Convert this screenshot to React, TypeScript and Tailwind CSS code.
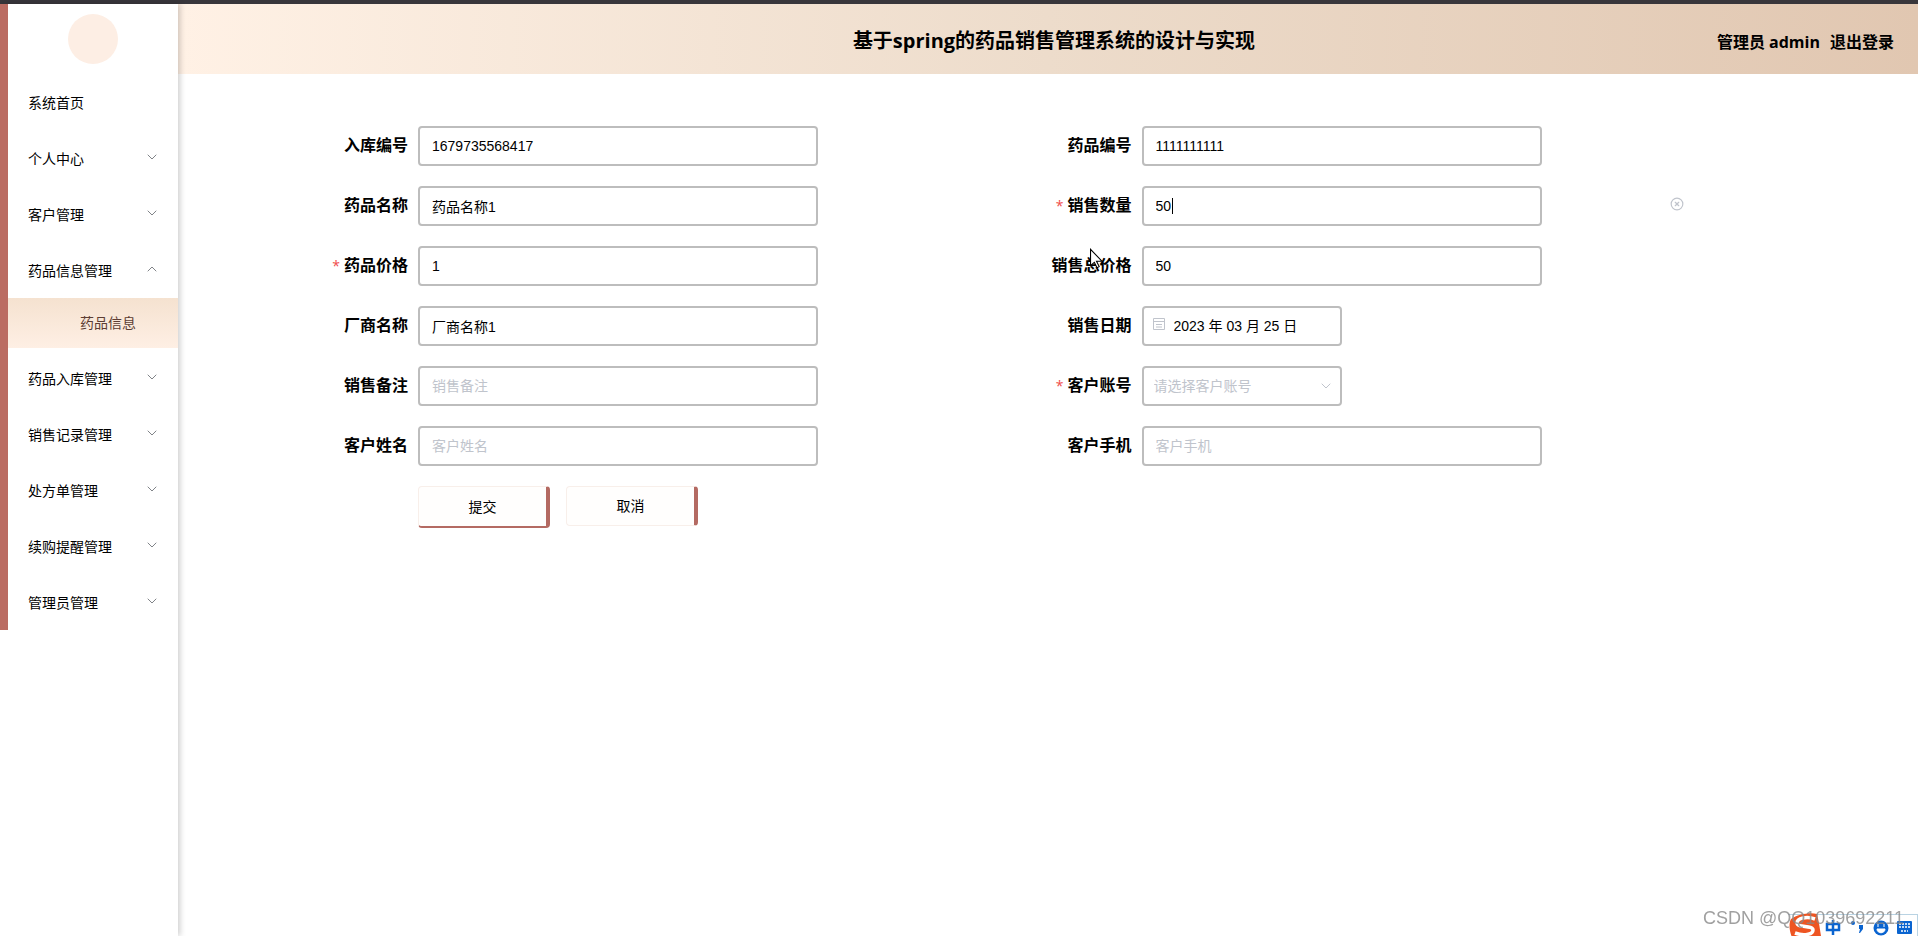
import { useId, useState } from "react";
import { ChevronDown, ChevronUp, CircleX } from "lucide-react";

interface MenuEntry {
  title: string;
  children?: string[];
  expanded?: boolean;
}

const menu: MenuEntry[] = [
  { title: "系统首页" },
  { title: "个人中心", children: [] },
  { title: "客户管理", children: [] },
  { title: "药品信息管理", children: ["药品信息"], expanded: true },
  { title: "药品入库管理", children: [] },
  { title: "销售记录管理", children: [] },
  { title: "处方单管理", children: [] },
  { title: "续购提醒管理", children: [] },
  { title: "管理员管理", children: [] },
];

const boxClass =
  "h-10 rounded border-2 border-[#bdbdbd] bg-white text-sm outline-none placeholder:text-[#c0c4cc]";

function Sidebar() {
  return (
    <aside className="z-10 flex w-[178px] shrink-0 items-start shadow-[2px_0_6px_rgba(0,0,0,0.2)]">
      <nav className="w-full border-l-8 border-[#bb6c62]">
        <div className="flex h-[70px] items-center justify-center">
          <div className="size-[50px] rounded-full bg-[#fdeee4]" />
        </div>
        <ul>
          {menu.map((entry) => (
            <li key={entry.title}>
              <button
                type="button"
                className="flex h-14 w-full items-center justify-between pt-0.5 pr-[18px] pl-5 text-sm text-black"
              >
                {entry.title}
                {entry.children &&
                  (entry.expanded ? (
                    <ChevronUp className="mb-1 size-4 text-[#808388]" strokeWidth={1.5} />
                  ) : (
                    <ChevronDown className="mb-1 size-4 text-[#808388]" strokeWidth={1.5} />
                  ))}
              </button>
              {entry.expanded &&
                entry.children?.map((child) => (
                  <a
                    key={child}
                    href="#"
                    className="mb-0.5 flex h-[50px] items-center bg-linear-to-b from-[#f5e2d0] to-[#feefe4] pl-[72px] text-sm text-[#5c3d33]"
                  >
                    {child}
                  </a>
                ))}
            </li>
          ))}
        </ul>
      </nav>
    </aside>
  );
}

function Header() {
  return (
    <header className="grid h-[70px] grid-cols-[1fr_auto_1fr] items-center bg-linear-to-r from-[#fff1e5] via-[#eddccb] to-[#e1c7b1] pt-1 pr-6 pl-9 font-['Open_Sans','Noto_Sans_CJK_SC',sans-serif] font-bold text-black">
      <h1 className="col-start-2 text-xl">基于spring的药品销售管理系统的设计与实现</h1>
      <div className="flex justify-end gap-2.5 pt-0.5 text-base">
        <span>管理员 admin</span>
        <a href="#">退出登录</a>
      </div>
    </header>
  );
}

interface FieldProperties {
  label: string;
  required?: boolean;
  value?: string;
  clearable?: boolean;
  focused?: boolean;
  kind?: "text" | "date" | "select";
}

function Field({
  label,
  required,
  value = "",
  clearable,
  focused,
  kind = "text",
}: FieldProperties) {
  const id = useId();
  const [text, setText] = useState(value);

  return (
    <div className="flex items-center">
      <label
        htmlFor={id}
        className="w-[95px] shrink-0 pr-2.5 text-right text-base font-bold whitespace-nowrap text-black"
      >
        {required && (
          <span className="mr-1 font-['Open_Sans',sans-serif] text-sm font-normal text-[#f04c4c]">
            *
          </span>
        )}
        {label}
      </label>

      {kind === "text" && (
        <div className="relative w-[400px]">
          <input
            id={id}
            type="text"
            value={text}
            placeholder={label}
            onChange={(event) => setText(event.target.value)}
            className={`${boxClass} w-full px-3 text-black`}
          />
          {focused && <span className="absolute top-3 left-[30px] h-4 w-px bg-black" />}
        </div>
      )}

      {kind === "date" && (
        <div className={`${boxClass} flex w-[200px] items-center gap-2 px-2 text-black`}>
          <svg
            viewBox="0 0 14 14"
            className="mb-1 size-3.5 shrink-0 text-[#c0c4cc]"
            fill="none"
            stroke="currentColor"
          >
            <path d="M1.5 1.5h11v11h-11zM1.5 4.5h11M4 7.5h6M4 10h6" />
          </svg>
          <input
            id={id}
            type="text"
            value={text}
            onChange={(event) => setText(event.target.value)}
            className="min-w-0 flex-1 outline-none"
          />
        </div>
      )}

      {kind === "select" && (
        <div className="relative w-[200px]">
          <select
            id={id}
            defaultValue=""
            className={`${boxClass} w-full appearance-none px-2.5 text-[#c0c4cc]`}
          >
            <option value="">请选择客户账号</option>
          </select>
          <ChevronDown
            className="pointer-events-none absolute top-3 right-2 size-4 text-[#c0c4cc]"
            strokeWidth={1.5}
          />
        </div>
      )}

      {clearable && (
        <button
          type="button"
          aria-label="清空"
          onClick={() => setText("")}
          className="mb-1 ml-32 text-[#c0c4cc]"
        >
          <CircleX className="size-3.5" strokeWidth={2} />
        </button>
      )}
    </div>
  );
}

function SaleForm() {
  return (
    <form className="pt-[52px] pr-[148px] pl-[145px]" onSubmit={(event) => event.preventDefault()}>
      <div className="grid grid-cols-2 gap-y-5">
        <Field label="入库编号" value="1679735568417" />
        <Field label="药品编号" value="1111111111" />
        <Field label="药品名称" value="药品名称1" />
        <Field label="销售数量" value="50" required clearable focused />
        <Field label="药品价格" value="1" required />
        <Field label="销售总价格" value="50" />
        <Field label="厂商名称" value="厂商名称1" />
        <Field label="销售日期" value="2023 年 03 月 25 日" kind="date" />
        <Field label="销售备注" />
        <Field label="客户账号" required kind="select" />
        <Field label="客户姓名" />
        <Field label="客户手机" />
      </div>
      <div className="mt-5 flex gap-4 pl-[95px] text-sm text-black">
        <button
          type="submit"
          className="h-[42px] w-[132px] rounded border border-r-4 border-b-2 border-[#f8efea] border-r-[#b46a62] border-b-[#b46a62] bg-[#fffefd]"
        >
          提交
        </button>
        <button
          type="button"
          className="h-10 w-[132px] rounded border border-r-4 border-[#f8efea] border-r-[#b46a62] bg-[#fffefd]"
        >
          取消
        </button>
      </div>
    </form>
  );
}

function MousePointer() {
  return (
    <svg
      viewBox="0 0 12 19"
      className="absolute top-[248px] left-[1090px] h-[21px] w-[13px]"
      fill="white"
      stroke="black"
    >
      <path d="M.5 1v15l3.5-3 2.5 5 2-1-2.500-5H11z" />
    </svg>
  );
}

// Input method bar in the corner of the screen, with the watermark across it
function ImeBar() {
  return (
    <div className="fixed right-0 bottom-0 h-8 w-[220px] overflow-hidden">
      <div className="absolute right-0 bottom-0 flex h-[22px] w-[130px] items-start border-t border-r border-[#b9d3e3] pt-1">
        <svg viewBox="0 0 124 18" className="h-[18px] w-[124px] overflow-visible">
          <path
            d="M3 0C10-5 22-7 29-5c2 8 3 16 4 22l-4 4H5C2 14 0 6 3 0z"
            fill="#ee5522"
          />
          <path
            d="M27 0C19-3 9-1 9 4s16 2 16 7-10 6-18 3"
            fill="none"
            stroke="white"
            strokeWidth="3.5"
          />
          <path
            d="M39 5h12v6H39zM45 1v15"
            stroke="#0a64d0"
            fill="none"
            strokeWidth="2.5"
          />
          <circle cx="65" cy="4" r="2" fill="#0a64d0" />
          <path d="M71 6h4v4l-3 4h-1l1-4h-1z" fill="#0a64d0" />
          <circle cx="93" cy="9" r="7.5" fill="#0a64d0" />
          <path d="M89 10h8c0 5-8 5-8 0zM90 5v3M96 5v3" fill="white" stroke="white" />
          <rect x="109" y="2" width="15" height="13" rx="1" fill="#0a64d0" />
          <path
            d="M111 5h11M111 8h11M113 12h7"
            stroke="white"
            strokeWidth="1.5"
            strokeDasharray="2 1"
          />
        </svg>
      </div>
      <p className="absolute top-0.5 right-3.5 text-lg leading-6 whitespace-nowrap text-[#888]/80">
        CSDN @QQ1039692211
      </p>
    </div>
  );
}

export default function App() {
  return (
    <div className="relative flex min-h-screen flex-col bg-white font-['Liberation_Sans','Noto_Sans_CJK_SC',sans-serif]">
      <div className="h-1 bg-[#38363b]" />
      <div className="flex flex-1">
        <Sidebar />
        <main className="min-w-0 flex-1">
          <Header />
          <SaleForm />
        </main>
      </div>
      <MousePointer />
      <ImeBar />
    </div>
  );
}
